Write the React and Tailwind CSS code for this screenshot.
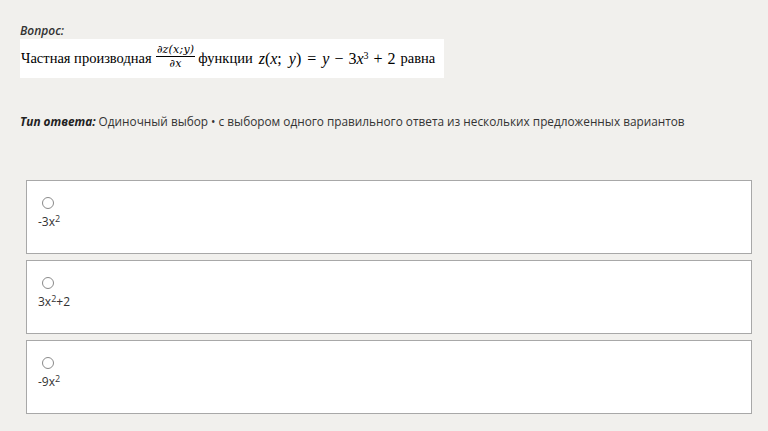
import React from 'react';

const options = [
  { id: 1, base: '-3x', sup: '2', tail: '' },
  { id: 2, base: '3x', sup: '2', tail: '+2' },
  { id: 3, base: '-9x', sup: '2', tail: '' },
];

function Frac() {
  return (
    <span className="inline-flex flex-col items-center align-middle ml-[4px] mr-[3px] text-[11px] leading-[13px] italic font-['DejaVu_Serif',serif] -translate-y-[2px] tracking-[0.2px]">
      <span className="px-[1px] border-b border-black">∂z(x;y)</span>
      <span>∂x</span>
    </span>
  );
}

export default function App() {
  return (
    <div className="w-[768px] h-[431px] bg-[#f1f0ed] font-['Open_Sans',sans-serif] text-[#222] overflow-hidden">
      <div className="pt-[23px] pl-[20px]">
        <div className="text-[12px] font-semibold italic text-[#333] leading-[16px]">Вопрос:</div>
        <div className="flex items-center bg-white w-[424px] h-[39px] px-[1px] text-[14.5px] text-black font-['Liberation_Serif',serif] whitespace-nowrap">
          <span>Частная производная</span>
          <Frac />
          <span>функции</span>
          <span className="ml-[6px] text-[16px] italic">z</span>
          <span className="text-[16px]">(</span>
          <span className="text-[16px] italic">x</span>
          <span className="text-[16px] mr-[7px]">;</span>
          <span className="text-[16px] italic">y</span>
          <span className="text-[16px]">)</span>
          <span className="text-[16px] mx-[6px]">=</span>
          <span className="text-[16px] italic">y</span>
          <span className="text-[16px] mx-[5px]">−</span>
          <span className="text-[16px]">3</span>
          <span className="text-[16px] italic">x</span>
          <span className="text-[10px] self-start mt-[9px]">3</span>
          <span className="text-[16px] mx-[5px]">+</span>
          <span className="text-[16px]">2</span>
          <span className="ml-[5px]">равна</span>
        </div>
      </div>

      <div className="mt-[34px] pl-[20px] text-[11.8px] leading-[18px] text-[#333]">
        <span className="font-bold italic text-[#222]">Тип ответа:</span> Одиночный выбор • с выбором одного правильного ответа из нескольких предложенных вариантов
      </div>

      <div className="mt-[50px] ml-[26px] w-[726px] flex flex-col gap-[6px]">
        {options.map((o) => (
          <div key={o.id} className="h-[74px] bg-white border border-[#a8a8a8] pl-[11px] pt-[16px]">
            <div className="w-[12px] h-[12px] rounded-full border border-[#8a8a8a] bg-white ml-[4px]" />
            <div className="text-[12px] leading-[16px] text-[#333] mt-[5px]">
              {o.base}
              <sup className="text-[9px]">{o.sup}</sup>
              {o.tail}
            </div>
          </div>
        ))}
      </div>
    </div>
  );
}
